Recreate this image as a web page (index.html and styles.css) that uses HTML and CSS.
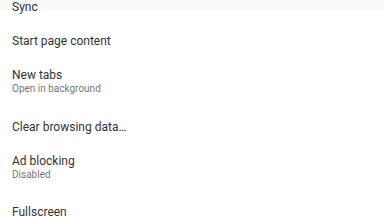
FILE: index.html
```html
<!DOCTYPE html>
<html>
<head>
  <meta charset="UTF-8">
  <title>Settings</title>
  <link rel="stylesheet" href="styles.css">
</head>
<body>
  <div class="prefs">
    <div class="pref">
      <div class="pref-title">Sync</div>
    </div>
    <div class="pref">
      <div class="pref-title">Start page content</div>
    </div>
    <div class="pref two-line">
      <div class="pref-title">New tabs</div>
      <div class="pref-summary">Open in background</div>
    </div>
    <div class="pref">
      <div class="pref-title">Clear browsing data…</div>
    </div>
    <div class="pref two-line">
      <div class="pref-title">Ad blocking</div>
      <div class="pref-summary">Disabled</div>
    </div>
    <div class="pref">
      <div class="pref-title">Fullscreen</div>
    </div>
  </div>
</body>
</html>
```

FILE: styles.css
```css
body {
  font-family: Roboto, 'Noto Sans', sans-serif;
  margin: 0;
  background-color: #fff;
  overflow: hidden;
}
body::before {
  content: '';
  position: absolute;
  top: 0;
  left: 0;
  right: 0;
  height: 11px;
  background-color: rgba(0, 0, 0, 0.018);
}
.prefs {
  margin-top: -10px;
}
.pref {
  padding: 10px 12px;
}
.pref.two-line {
  padding-bottom: 13.6px;
}
.pref-title {
  font-size: 12px;
  line-height: 14px;
  color: #333;
}
.pref-summary {
  font-size: 10px;
  line-height: 14px;
  color: #777;
}
```
